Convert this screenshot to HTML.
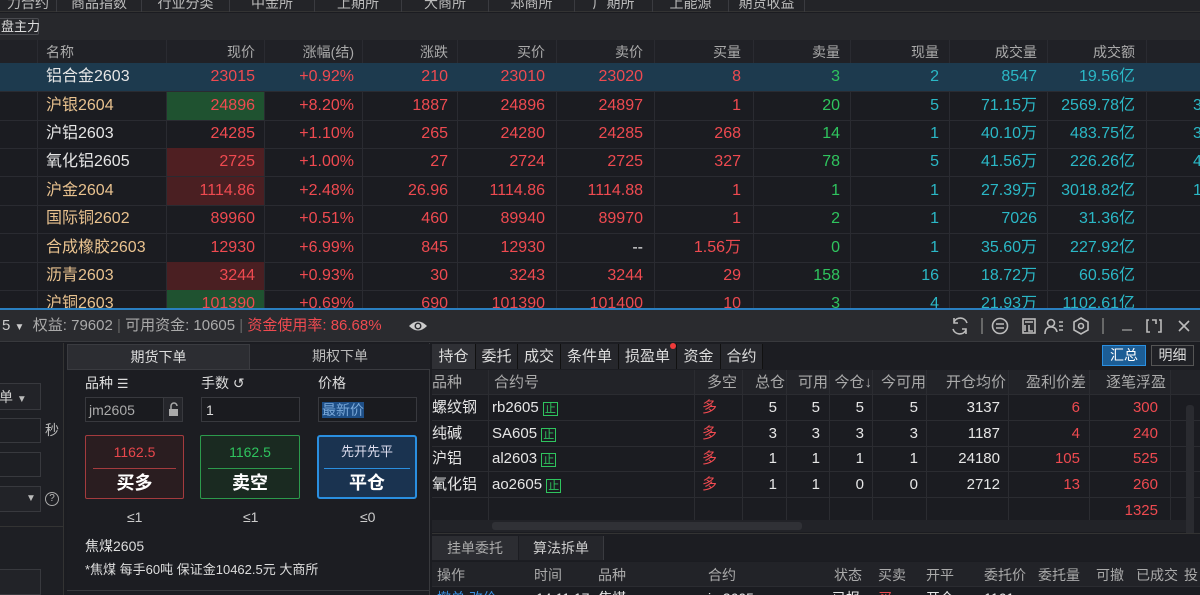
<!DOCTYPE html>
<html><head><meta charset="utf-8">
<style>
*{margin:0;padding:0;box-sizing:border-box}
body{width:1200px;height:595px;overflow:hidden;background:#1b1c21;font-family:"Liberation Sans","Noto Sans CJK SC",sans-serif;color:#d8d8d8;position:relative}
.a{position:absolute;white-space:nowrap}
.r{color:#ef4a50}.g{color:#2fc45e}.c{color:#2bb8c6}.w{color:#e6e6e6}.o{color:#e9c28f}
.row{position:absolute;left:0;width:1200px;height:29px;border-bottom:1px solid #2a2b31;font-size:16px}
.row .a{top:4px;text-align:right;line-height:20px;height:20px}
.vl{position:absolute;top:40px;height:269px;width:1px;background:#2a2b31}
.tab{position:absolute;top:-6px;height:18px;border-right:1px solid #3a3b40;font-size:14px;color:#bbb;text-align:center;line-height:18px}
.pt{position:absolute;font-size:14px;line-height:18px}
.pr{position:absolute;width:768px;left:432px;height:26px;border-bottom:1px solid #2b2c31;font-size:15px}
.pr .a{top:3px;line-height:20px;height:20px}
</style></head><body>
<div class="a" style="left:0;top:0;width:1200px;height:12px;background:#232428;border-bottom:1px solid #333"></div>
<div class="tab" style="left:0;width:57px">力合约</div>
<div class="tab" style="left:57px;width:85px">商品指数</div>
<div class="tab" style="left:142px;width:88px">行业分类</div>
<div class="tab" style="left:230px;width:85px">中金所</div>
<div class="tab" style="left:315px;width:87px">上期所</div>
<div class="tab" style="left:402px;width:87px">大商所</div>
<div class="tab" style="left:489px;width:86px">郑商所</div>
<div class="tab" style="left:575px;width:78px">广期所</div>
<div class="tab" style="left:653px;width:76px">上能源</div>
<div class="tab" style="left:729px;width:76px">期货收益</div>
<div class="a" style="left:0;top:13px;width:1200px;height:27px;background:#27282c"></div>
<div class="a" style="left:-2px;top:18px;width:41px;height:17px;border:1px solid #4a4b50;border-radius:2px;font-size:13px;color:#ddd;line-height:15px;padding-left:2px">盘主力</div>
<div class="a" style="left:0;top:40px;width:1200px;height:24px;background:#202126;border-bottom:1px solid #2a2b31"></div>
<div class="vl" style="left:37px"></div><div class="vl" style="left:166px"></div><div class="vl" style="left:264px"></div><div class="vl" style="left:362px"></div><div class="vl" style="left:457px"></div><div class="vl" style="left:556px"></div><div class="vl" style="left:654px"></div><div class="vl" style="left:753px"></div><div class="vl" style="left:850px"></div><div class="vl" style="left:949px"></div><div class="vl" style="left:1047px"></div><div class="vl" style="left:1146px"></div>
<div style="position:absolute;top:43px;left:0;width:1200px;font-size:14px;color:#aaa;line-height:18px">
<span class="a" style="left:46px">名称</span>
<span class="a" style="right:945px">现价</span><span class="a" style="right:846px">涨幅(结)</span><span class="a" style="right:752px">涨跌</span><span class="a" style="right:655px">买价</span><span class="a" style="right:557px">卖价</span><span class="a" style="right:459px">买量</span><span class="a" style="right:360px">卖量</span><span class="a" style="right:261px">现量</span><span class="a" style="right:163px">成交量</span><span class="a" style="right:65px">成交额</span>
</div>
<div class="row" style="top:63px;background:#1d3a4e">
<span class="a w" style="left:46px">铝合金2603</span>
<span class="a r" style="right:945px">23015</span><span class="a r" style="right:846px">+0.92%</span><span class="a r" style="right:752px">210</span><span class="a r" style="right:655px">23010</span><span class="a r" style="right:557px">23020</span><span class="a r" style="right:459px">8</span><span class="a g" style="right:360px">3</span><span class="a c" style="right:261px">2</span><span class="a c" style="right:163px">8547</span><span class="a c" style="right:65px">19.56亿</span></div>
<div class="row" style="top:92px"><div class="a" style="left:167px;top:0;width:97px;height:28px;background:#1f5230"></div>
<span class="a o" style="left:46px">沪银2604</span>
<span class="a r" style="right:945px">24896</span><span class="a r" style="right:846px">+8.20%</span><span class="a r" style="right:752px">1887</span><span class="a r" style="right:655px">24896</span><span class="a r" style="right:557px">24897</span><span class="a r" style="right:459px">1</span><span class="a g" style="right:360px">20</span><span class="a c" style="right:261px">5</span><span class="a c" style="right:163px">71.15万</span><span class="a c" style="right:65px">2569.78亿</span><span class="a c" style="left:1193px">3</span></div>
<div class="row" style="top:120px">
<span class="a w" style="left:46px">沪铝2603</span>
<span class="a r" style="right:945px">24285</span><span class="a r" style="right:846px">+1.10%</span><span class="a r" style="right:752px">265</span><span class="a r" style="right:655px">24280</span><span class="a r" style="right:557px">24285</span><span class="a r" style="right:459px">268</span><span class="a g" style="right:360px">14</span><span class="a c" style="right:261px">1</span><span class="a c" style="right:163px">40.10万</span><span class="a c" style="right:65px">483.75亿</span><span class="a c" style="left:1193px">3</span></div>
<div class="row" style="top:148px"><div class="a" style="left:167px;top:0;width:97px;height:28px;background:#4f1f22"></div>
<span class="a w" style="left:46px">氧化铝2605</span>
<span class="a r" style="right:945px">2725</span><span class="a r" style="right:846px">+1.00%</span><span class="a r" style="right:752px">27</span><span class="a r" style="right:655px">2724</span><span class="a r" style="right:557px">2725</span><span class="a r" style="right:459px">327</span><span class="a g" style="right:360px">78</span><span class="a c" style="right:261px">5</span><span class="a c" style="right:163px">41.56万</span><span class="a c" style="right:65px">226.26亿</span><span class="a c" style="left:1193px">4</span></div>
<div class="row" style="top:177px"><div class="a" style="left:167px;top:0;width:97px;height:28px;background:#4a1f22"></div>
<span class="a o" style="left:46px">沪金2604</span>
<span class="a r" style="right:945px">1114.86</span><span class="a r" style="right:846px">+2.48%</span><span class="a r" style="right:752px">26.96</span><span class="a r" style="right:655px">1114.86</span><span class="a r" style="right:557px">1114.88</span><span class="a r" style="right:459px">1</span><span class="a g" style="right:360px">1</span><span class="a c" style="right:261px">1</span><span class="a c" style="right:163px">27.39万</span><span class="a c" style="right:65px">3018.82亿</span><span class="a c" style="left:1193px">1</span></div>
<div class="row" style="top:205px">
<span class="a o" style="left:46px">国际铜2602</span>
<span class="a r" style="right:945px">89960</span><span class="a r" style="right:846px">+0.51%</span><span class="a r" style="right:752px">460</span><span class="a r" style="right:655px">89940</span><span class="a r" style="right:557px">89970</span><span class="a r" style="right:459px">1</span><span class="a g" style="right:360px">2</span><span class="a c" style="right:261px">1</span><span class="a c" style="right:163px">7026</span><span class="a c" style="right:65px">31.36亿</span></div>
<div class="row" style="top:234px">
<span class="a o" style="left:46px">合成橡胶2603</span>
<span class="a r" style="right:945px">12930</span><span class="a r" style="right:846px">+6.99%</span><span class="a r" style="right:752px">845</span><span class="a r" style="right:655px">12930</span><span class="a w" style="right:557px">--</span><span class="a r" style="right:459px">1.56万</span><span class="a g" style="right:360px">0</span><span class="a c" style="right:261px">1</span><span class="a c" style="right:163px">35.60万</span><span class="a c" style="right:65px">227.92亿</span></div>
<div class="row" style="top:262px"><div class="a" style="left:167px;top:0;width:97px;height:28px;background:#4a1f22"></div>
<span class="a o" style="left:46px">沥青2603</span>
<span class="a r" style="right:945px">3244</span><span class="a r" style="right:846px">+0.93%</span><span class="a r" style="right:752px">30</span><span class="a r" style="right:655px">3243</span><span class="a r" style="right:557px">3244</span><span class="a r" style="right:459px">29</span><span class="a g" style="right:360px">158</span><span class="a c" style="right:261px">16</span><span class="a c" style="right:163px">18.72万</span><span class="a c" style="right:65px">60.56亿</span></div>
<div class="row" style="top:290px;height:19px;overflow:hidden;border:0"><div class="a" style="left:167px;top:0;width:97px;height:28px;background:#1f5230"></div>
<span class="a o" style="left:46px">沪铜2603</span>
<span class="a r" style="right:945px">101390</span><span class="a r" style="right:846px">+0.69%</span><span class="a r" style="right:752px">690</span><span class="a r" style="right:655px">101390</span><span class="a r" style="right:557px">101400</span><span class="a r" style="right:459px">10</span><span class="a g" style="right:360px">3</span><span class="a c" style="right:261px">4</span><span class="a c" style="right:163px">21.93万</span><span class="a c" style="right:65px">1102.61亿</span></div>
<div class="a" style="left:0;top:308px;width:1200px;height:2px;background:#2a7fc0"></div>
<div class="a" style="left:0;top:310px;width:1200px;height:32px;background:#2a2b2f;border-bottom:1px solid #38393d"></div>
<div class="a" style="left:2px;top:316px;font-size:15px;color:#ccc;line-height:20px">5 <span style="font-size:10px">▼</span>&nbsp; <span style="color:#aaa">权益: 79602</span> <span style="color:#666">|</span> <span style="color:#aaa">可用资金: 10605</span> <span style="color:#666">|</span> <span class="r">资金使用率: 86.68%</span></div>
<svg class="a" style="left:408px;top:319px" width="20" height="14" viewBox="0 0 20 14"><path d="M1 7 Q10 -2 19 7 Q10 16 1 7Z" fill="#ccc"/><circle cx="10" cy="7" r="3.5" fill="#2a2b2f"/><circle cx="10" cy="7" r="2" fill="#ccc"/></svg>
<svg class="a" style="left:948px;top:315px" width="250" height="22" viewBox="0 0 250 22" fill="none" stroke="#bbb" stroke-width="1.6">
<path d="M19 8 A7 7 0 0 0 6 7 M5 14 A7 7 0 0 0 18 15"/><path d="M6 3 V8 H10 M18 19 V14 H14"/>
<line x1="34" y1="3" x2="34" y2="19" stroke="#777"/>
<circle cx="52" cy="11" r="7.5"/><path d="M48 9 H56 M48 13 H56"/>
<rect x="75" y="4" width="12" height="14"/><path d="M77 7 H85 M77 10 V16 M81 10 V16 H85"/>
<circle cx="103" cy="8" r="3.5"/><path d="M97 19 Q97 12 103 12 Q108 12 109 17 M111 7 H115 M111 11 H115 M111 15 H115"/>
<path d="M133 3 L140 7 V15 L133 19 L126 15 V7Z"/><circle cx="133" cy="11" r="2.5"/>
<line x1="155" y1="3" x2="155" y2="19" stroke="#777"/>
<path d="M174 15 H184" stroke="#888"/>
<path d="M201 5 H199 V17 H202 M211 5 H213 V17 H210 M204 5 H208 V9"/>
<path d="M231 6 L241 16 M241 6 L231 16"/>
</svg>
<div class="a" style="left:0;top:343px;width:64px;height:252px;background:#1e1f24;border-right:1px solid #333"></div>
<div class="a" style="left:-2px;top:383px;width:43px;height:27px;border:1px solid #38393e;background:#222328;font-size:14px;color:#ccc;padding:4px 0 0 0;line-height:18px">单 <span style="font-size:10px;color:#bbb">▼</span></div>
<div class="a" style="left:-2px;top:418px;width:43px;height:25px;border:1px solid #38393e"></div>
<div class="a" style="left:45px;top:420px;font-size:14px;color:#bbb">秒</div>
<div class="a" style="left:-2px;top:452px;width:43px;height:25px;border:1px solid #38393e"></div>
<div class="a" style="left:-2px;top:486px;width:43px;height:26px;border:1px solid #38393e;background:#222328;font-size:10px;color:#bbb;padding:6px 0 0 27px">▼</div>
<div class="a" style="left:45px;top:492px;width:14px;height:14px;border:1px solid #aaa;border-radius:50%;font-size:10px;color:#bbb;text-align:center;line-height:12px">?</div>
<div class="a" style="left:0;top:526px;width:64px;height:1px;background:#333"></div>
<div class="a" style="left:-2px;top:569px;width:43px;height:26px;border:1px solid #38393e;background:#222328"></div>
<div class="a" style="left:67px;top:343px;width:363px;height:252px;background:#1c1d22;border-right:1px solid #38393d"></div>
<div class="a" style="left:67px;top:344px;width:183px;height:26px;background:#2c2d32;border:1px solid #3a3b40;font-size:14px;color:#ddd;text-align:center;line-height:24px">期货下单</div>
<div class="a" style="left:250px;top:344px;width:180px;height:26px;background:#1f2025;border-bottom:1px solid #3a3b40;font-size:14px;color:#bbb;text-align:center;line-height:24px">期权下单</div>
<div class="pt" style="left:85px;top:374px;color:#ddd">品种 <span style="font-size:13px">☰</span></div>
<div class="pt" style="left:201px;top:374px;color:#ddd">手数 <span>↺</span></div>
<div class="pt" style="left:318px;top:374px;color:#ddd">价格</div>
<div class="a" style="left:85px;top:397px;width:98px;height:25px;border:1px solid #38393e;background:#1a1b1f;font-size:14px;color:#aaa;padding:3px 0 0 3px;line-height:18px">jm2605</div>
<div class="a" style="left:163px;top:398px;width:19px;height:23px;border-left:1px solid #38393e;background:#25262b"><svg width="19" height="23" viewBox="0 0 19 23"><rect x="5" y="11" width="9" height="7" fill="#aaa"/><path d="M7 11 V8 A3 3 0 0 1 13 8" stroke="#aaa" stroke-width="1.5" fill="none"/></svg></div>
<div class="a" style="left:201px;top:397px;width:99px;height:25px;border:1px solid #38393e;background:#1a1b1f;font-size:14px;color:#ddd;padding:3px 0 0 4px;line-height:18px">1</div>
<div class="a" style="left:318px;top:397px;width:99px;height:25px;border:1px solid #38393e;background:#1a1b1f;font-size:14px;padding:3px 0 0 3px;line-height:18px"><span style="background:#1e4f87;color:#7aa8d8">最新价</span></div>
<div class="a" style="left:85px;top:435px;width:99px;height:64px;border:1px solid #a43b3e;border-radius:2px;background:#2a1d20;text-align:center">
<div style="font-size:14px;line-height:18px;color:#e8474c;margin-top:7px">1162.5</div><div style="height:1px;background:#a43b3e;margin:7px 7px 0"></div><div style="font-size:18px;line-height:24px;font-weight:bold;color:#fff;margin-top:2px">买多</div></div>
<div class="a" style="left:200px;top:435px;width:100px;height:64px;border:1px solid #2c9a4c;border-radius:2px;background:#1a2a21;text-align:center">
<div style="font-size:14px;line-height:18px;color:#2fc45e;margin-top:7px">1162.5</div><div style="height:1px;background:#2c9a4c;margin:7px 7px 0"></div><div style="font-size:18px;line-height:24px;font-weight:bold;color:#fff;margin-top:2px">卖空</div></div>
<div class="a" style="left:317px;top:435px;width:100px;height:64px;border:2px solid #2a8fe0;border-radius:3px;background:#1a3350;text-align:center">
<div style="font-size:13px;line-height:18px;color:#dde;margin-top:6px">先开先平</div><div style="height:1px;background:#2a8fe0;margin:7px 5px 0"></div><div style="font-size:18px;line-height:24px;font-weight:bold;color:#fff;margin-top:2px">平仓</div></div>
<div class="pt" style="left:127px;top:508px;color:#ccc">≤1</div>
<div class="pt" style="left:243px;top:508px;color:#ccc">≤1</div>
<div class="pt" style="left:360px;top:508px;color:#ccc">≤0</div>
<div class="pt" style="left:85px;top:537px;color:#ddd">焦煤2605</div>
<div class="pt" style="left:85px;top:561px;color:#ddd;font-size:13px">*焦煤 每手60吨 保证金10462.5元 大商所</div>
<div class="a" style="left:67px;top:590px;width:363px;height:1px;background:#38393d"></div>
<div class="a" style="left:432px;top:343px;width:768px;height:27px;background:#1c1d22"></div>
<div class="a" style="left:432px;top:344px;height:25px;font-size:15px;color:#ddd;line-height:25px">
<span class="a" style="left:0;width:43px;background:#2f3035;text-align:center">持仓</span>
<span class="a" style="left:43px;width:42px;background:#26272c;text-align:center;border-left:1px solid #111">委托</span>
<span class="a" style="left:85px;width:43px;background:#26272c;text-align:center;border-left:1px solid #111">成交</span>
<span class="a" style="left:128px;width:58px;background:#26272c;text-align:center;border-left:1px solid #111">条件单</span>
<span class="a" style="left:186px;width:58px;background:#26272c;text-align:center;border-left:1px solid #111">损盈单</span>
<span class="a" style="left:244px;width:44px;background:#26272c;text-align:center;border-left:1px solid #111">资金</span>
<span class="a" style="left:288px;width:43px;background:#26272c;text-align:center;border-left:1px solid #111;border-right:1px solid #111">合约</span>
</div>
<div class="a" style="left:670px;top:343px;width:6px;height:6px;border-radius:50%;background:#f03a3a"></div>
<div class="a" style="left:1102px;top:345px;width:44px;height:21px;background:#1c5d95;border:1px solid #2a8fe0;font-size:14px;color:#fff;text-align:center;line-height:19px">汇总</div>
<div class="a" style="left:1151px;top:345px;width:43px;height:21px;background:#202126;border:1px solid #555;font-size:14px;color:#ddd;text-align:center;line-height:19px">明细</div>
<div class="a" style="left:432px;top:370px;width:768px;height:25px;background:#222328;border-bottom:1px solid #2b2c31"></div>
<div class="a" style="left:432px;top:374px;width:768px;height:18px;font-size:15px;color:#aaa;line-height:18px">
<span class="a" style="left:0">品种</span><span class="a" style="left:62px">合约号</span><span class="a" style="left:275px">多空</span><span class="a" style="right:415px">总仓</span><span class="a" style="right:372px">可用</span><span class="a" style="right:328px">今仓↓</span><span class="a" style="right:274px">今可用</span><span class="a" style="right:194px">开仓均价</span><span class="a" style="right:114px">盈利价差</span><span class="a" style="right:34px">逐笔浮盈</span></div>
<div class="pr" style="top:395px"><span class="a w" style="left:0">螺纹钢</span><span class="a w" style="left:60px">rb2605 <span class="g" style="border:1px solid #2fc45e;font-size:11px;padding:0 1px">止</span></span><span class="a r" style="left:270px">多</span><span class="a w" style="right:423px">5</span><span class="a w" style="right:380px">5</span><span class="a w" style="right:336px">5</span><span class="a w" style="right:282px">5</span><span class="a w" style="right:200px">3137</span><span class="a r" style="right:120px">6</span><span class="a r" style="right:42px">300</span></div>
<div class="pr" style="top:421px"><span class="a w" style="left:0">纯碱</span><span class="a w" style="left:60px">SA605 <span class="g" style="border:1px solid #2fc45e;font-size:11px;padding:0 1px">止</span></span><span class="a r" style="left:270px">多</span><span class="a w" style="right:423px">3</span><span class="a w" style="right:380px">3</span><span class="a w" style="right:336px">3</span><span class="a w" style="right:282px">3</span><span class="a w" style="right:200px">1187</span><span class="a r" style="right:120px">4</span><span class="a r" style="right:42px">240</span></div>
<div class="pr" style="top:446px"><span class="a w" style="left:0">沪铝</span><span class="a w" style="left:60px">al2603 <span class="g" style="border:1px solid #2fc45e;font-size:11px;padding:0 1px">止</span></span><span class="a r" style="left:270px">多</span><span class="a w" style="right:423px">1</span><span class="a w" style="right:380px">1</span><span class="a w" style="right:336px">1</span><span class="a w" style="right:282px">1</span><span class="a w" style="right:200px">24180</span><span class="a r" style="right:120px">105</span><span class="a r" style="right:42px">525</span></div>
<div class="pr" style="top:472px"><span class="a w" style="left:0">氧化铝</span><span class="a w" style="left:60px">ao2605 <span class="g" style="border:1px solid #2fc45e;font-size:11px;padding:0 1px">止</span></span><span class="a r" style="left:270px">多</span><span class="a w" style="right:423px">1</span><span class="a w" style="right:380px">1</span><span class="a w" style="right:336px">0</span><span class="a w" style="right:282px">0</span><span class="a w" style="right:200px">2712</span><span class="a r" style="right:120px">13</span><span class="a r" style="right:42px">260</span></div>
<div class="pr" style="top:498px;border:0"><span class="a r" style="right:42px">1325</span></div>
<div style="position:absolute;left:0;top:0">
<div class="a" style="left:488px;top:370px;width:1px;height:150px;background:#2b2c31"></div><div class="a" style="left:694px;top:370px;width:1px;height:150px;background:#2b2c31"></div><div class="a" style="left:742px;top:370px;width:1px;height:150px;background:#2b2c31"></div><div class="a" style="left:786px;top:370px;width:1px;height:150px;background:#2b2c31"></div><div class="a" style="left:829px;top:370px;width:1px;height:150px;background:#2b2c31"></div><div class="a" style="left:872px;top:370px;width:1px;height:150px;background:#2b2c31"></div><div class="a" style="left:926px;top:370px;width:1px;height:150px;background:#2b2c31"></div><div class="a" style="left:1008px;top:370px;width:1px;height:150px;background:#2b2c31"></div><div class="a" style="left:1089px;top:370px;width:1px;height:150px;background:#2b2c31"></div><div class="a" style="left:1170px;top:370px;width:1px;height:150px;background:#2b2c31"></div>
</div>
<div class="a" style="left:1186px;top:405px;width:8px;height:140px;background:#2a2b30;border-radius:3px"></div>
<div class="a" style="left:432px;top:520px;width:754px;height:12px;background:#222328"></div>
<div class="a" style="left:492px;top:522px;width:310px;height:8px;background:#303136;border-radius:3px"></div>
<div class="a" style="left:432px;top:533px;width:768px;height:28px;background:#1c1d22;border-top:1px solid #333"></div>
<div class="a" style="left:432px;top:536px;width:86px;height:24px;background:#2c2d32;font-size:14px;color:#aaa;text-align:center;line-height:24px">挂单委托</div>
<div class="a" style="left:519px;top:536px;width:85px;height:24px;background:#25262b;border-right:1px solid #3a3b40;font-size:14px;color:#ccc;text-align:center;line-height:24px">算法拆单</div>
<div class="a" style="left:432px;top:562px;width:768px;height:25px;background:#222328;border-bottom:1px solid #2b2c31"></div>
<div class="a" style="left:432px;top:566px;width:768px;height:18px;font-size:14px;color:#aaa;line-height:18px">
<span class="a" style="left:5px">操作</span><span class="a" style="left:102px">时间</span><span class="a" style="left:166px">品种</span><span class="a" style="left:276px">合约</span><span class="a" style="left:402px">状态</span><span class="a" style="left:446px">买卖</span><span class="a" style="left:494px">开平</span><span class="a" style="left:552px">委托价</span><span class="a" style="left:606px">委托量</span><span class="a" style="left:664px">可撤</span><span class="a" style="left:704px">已成交</span><span class="a" style="left:752px">投</span></div>
<div class="a" style="left:432px;top:588px;width:768px;height:7px;overflow:hidden;font-size:14px;line-height:18px">
<span class="a" style="left:5px;top:1px;color:#3a8fe0">撤单 改价</span><span class="a w" style="left:104px;top:1px">14:11:17</span><span class="a w" style="left:166px;top:1px">焦煤</span><span class="a w" style="left:276px;top:1px">jm2605</span><span class="a w" style="left:400px;top:1px">已报</span><span class="a r" style="left:446px;top:1px">买</span><span class="a w" style="left:494px;top:1px">开仓</span><span class="a w" style="left:552px;top:1px">1161</span></div>
</body></html>
